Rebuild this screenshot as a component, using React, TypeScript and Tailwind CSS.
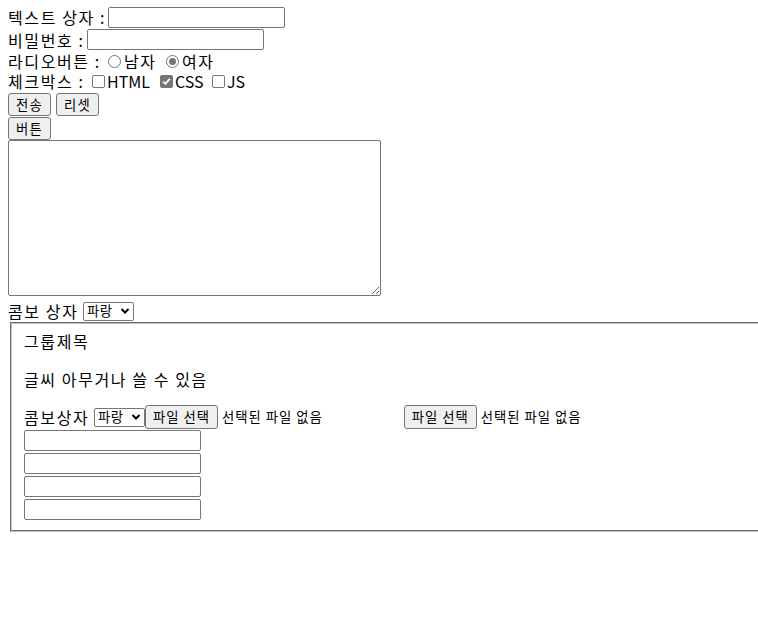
import React from "react";

const font = { fontFamily: '"Noto Sans CJK KR", "Noto Sans", sans-serif' };

function TextBox({ className = "" }: { className?: string }) {
  return (
    <input
      type="text"
      className={
        "block w-[177px] h-[21px] border border-[#767676] rounded-[2px] bg-white outline-none " +
        className
      }
    />
  );
}

function Btn({ children }: { children: React.ReactNode }) {
  return (
    <button className="h-[23px] w-[43px] bg-[#efefef] border border-[#767676] rounded-[3px] text-[13.33px] leading-none text-black tracking-[1.2px]">
      {children}
    </button>
  );
}

function Radio({ checked }: { checked?: boolean }) {
  return (
    <span className="inline-flex items-center justify-center w-[13px] h-[13px] rounded-full border border-[#767676] bg-white mr-[3px]">
      {checked && <span className="w-[7px] h-[7px] rounded-full bg-[#767676]" />}
    </span>
  );
}

function Check({ checked }: { checked?: boolean }) {
  return (
    <span
      className={
        "inline-flex items-center justify-center w-[13px] h-[13px] rounded-[2px] border border-[#767676] mr-[2px] " +
        (checked ? "bg-[#767676]" : "bg-white")
      }
    >
      {checked && (
        <svg width="9" height="9" viewBox="0 0 9 9">
          <path d="M1.2 4.6 L3.5 6.8 L7.8 1.8" stroke="white" strokeWidth="1.8" fill="none" />
        </svg>
      )}
    </span>
  );
}

function Select() {
  return (
    <span className="inline-flex items-center h-[19px] w-[51px] border border-[#767676] rounded-[2px] bg-white pl-[3px] pr-[3px] text-[13.33px] leading-none justify-between tracking-[0.5px]">
      <span>파랑</span>
      <svg width="10" height="8" viewBox="0 0 10 8">
        <path d="M1.5 2 L5 5.5 L8.5 2" stroke="black" strokeWidth="2" fill="none" />
      </svg>
    </span>
  );
}

function FileInput() {
  return (
    <span className="inline-flex items-center">
      <span className="inline-flex items-center justify-center h-[24px] w-[73px] bg-[#efefef] border border-[#767676] rounded-[3px] text-[13.33px] leading-none tracking-[1px]">
        파일 선택
      </span>
      <span className="ml-[4px] text-[13.33px] leading-none tracking-[1px]">선택된 파일 없음</span>
    </span>
  );
}

export default function App() {
  return (
    <div className="w-[758px] h-[635px] overflow-hidden bg-white text-black text-[16px]" style={font}>
      <div className="pl-[8px] pt-[6px]">
        <div className="flex items-center h-[22px] leading-[22px]">
          <span className="w-[100px] tracking-[1.6px]">텍스트 상자 :</span>
          <TextBox />
        </div>
        <div className="flex items-center h-[23px] leading-[22px]">
          <span className="w-[79px] tracking-[1.6px]">비밀번호 :</span>
          <TextBox />
        </div>
        <div className="flex items-center h-[20px] leading-[20px]">
          <span className="w-[100px] tracking-[1.6px]">라디오버튼 :</span>
          <Radio />
          <span className="w-[42px] tracking-[1.6px]">남자</span>
          <Radio checked />
          <span className="tracking-[1.6px]">여자</span>
        </div>
        <div className="flex items-center h-[21px] leading-[21px]">
          <span className="w-[84px] tracking-[1.6px]">체크박스 :</span>
          <Check />
          <span className="w-[53px]">HTML</span>
          <Check checked />
          <span className="w-[37px]">CSS</span>
          <Check />
          <span>JS</span>
        </div>
        <div className="flex items-start gap-[5px] h-[24px] pt-[1px]">
          <Btn>전송</Btn>
          <Btn>리셋</Btn>
        </div>
        <div className="flex items-start h-[24px] pt-[1px]">
          <Btn>버튼</Btn>
        </div>
        <textarea className="block w-[373px] h-[156px] border border-[#767676] rounded-[2px] bg-white resize outline-none" />
        <div className="flex items-center h-[26px] pt-[4px] leading-[22px]">
          <span className="w-[75px] tracking-[1.6px]">콤보 상자</span>
          <Select />
        </div>
        <fieldset className="ml-[2px] w-[800px] border-2 [border-style:groove] border-[#c0c0c0] px-[12px] pt-[6px] pb-[10px]">
          <div className="flex items-center h-[22px] tracking-[1.6px]">그룹제목</div>
          <div className="flex items-center h-[22px] mt-[16px] tracking-[1.6px]">글씨 아무거나 쓸 수 있음</div>
          <div className="flex items-center h-[22px] mt-[16px] mb-[2px]">
            <span className="w-[70px] tracking-[1.6px]">콤보상자</span>
            <Select />
            <FileInput />
            <span className="w-[81px]" />
            <FileInput />
          </div>
          <div className="flex flex-col gap-[2px]">
            <TextBox />
            <TextBox />
            <TextBox />
            <TextBox />
          </div>
        </fieldset>
      </div>
    </div>
  );
}
